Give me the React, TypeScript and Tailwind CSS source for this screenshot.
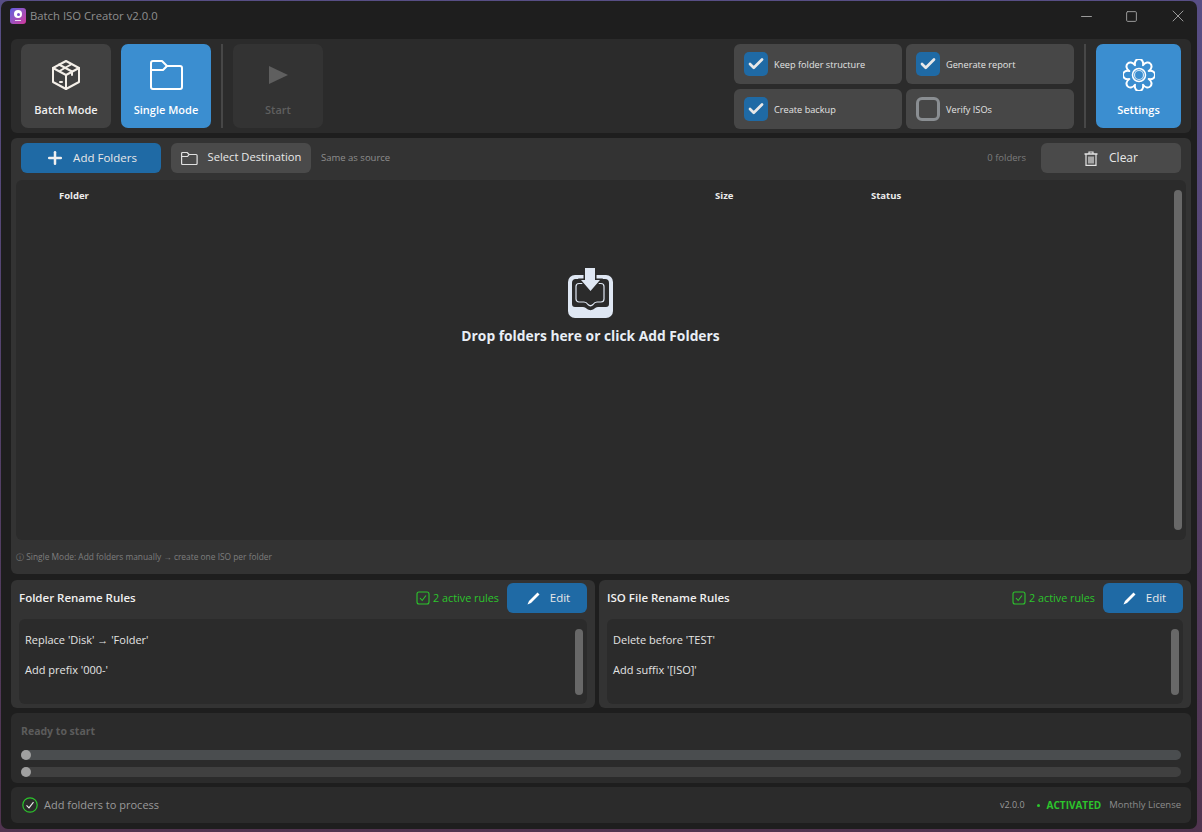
import { Minus, Square, X, Plus, Check } from 'lucide-react';

const font = { fontFamily: '"Open Sans", "Noto Sans", sans-serif' };

// 8 rounded lobes round the centre
function gearPath() {
  const lobes = 8;
  const outer = 17;
  const inner = 10.5;
  let d = '';
  for (let i = 0; i < lobes; i++) {
    const a = (i / lobes) * Math.PI * 2 - Math.PI / 2;
    const step = Math.PI / lobes;
    const pt = (r: number, t: number) => `${(16 + r * Math.cos(t)).toFixed(2)} ${(16 + r * Math.sin(t)).toFixed(2)}`;
    if (i === 0) d += `M${pt(inner, a - step)} `;
    d += `C${pt(outer + 2, a - step * 0.75)} ${pt(outer + 2, a + step * 0.75)} ${pt(inner, a + step)} `;
  }
  return d + 'Z';
}

function BoxIcon() {
  return (
    <svg width="32" height="32" viewBox="0 0 32 32" fill="none" stroke="#f4efe8" strokeWidth="2" strokeLinejoin="round" strokeLinecap="round">
      <path d="M16 2 L29 9 V23 L16 30 L3 23 V9 Z" />
      <path d="M3 9 L16 16 L29 9" />
      <path d="M16 16 V30" />
      <path d="M9 5.5 L22 12.5 V16" />
      <path d="M21 5.5 L9.5 12" />
      <path d="M10 23 h2" />
    </svg>
  );
}

function FolderIcon() {
  return (
    <svg width="34" height="32" viewBox="0 0 34 32" fill="none" stroke="#ffffff" strokeWidth="2" strokeLinejoin="round">
      <path d="M2 4 a2 2 0 0 1 2 -2 h9 l5 5 h13 a2 2 0 0 1 2 2 V28 a2 2 0 0 1 -2 2 H4 a2 2 0 0 1 -2 -2 Z" />
      <path d="M2 11 H14 L18 7" />
    </svg>
  );
}

function SmallFolder() {
  return (
    <svg width="17" height="13" viewBox="0 0 17 13" fill="none" stroke="#e0e0e0" strokeWidth="1.200" strokeLinejoin="round">
      <path d="M0.600 1.500 a1 1 0 0 1 1 -1 h4.500 l2 2 h7 a1 1 0 0 1 1 1 V11.500 a1 1 0 0 1 -1 1 H1.600 a1 1 0 0 1 -1 -1 Z" />
      <path d="M0.600 4.500 H6.500 L8 2.600" />
    </svg>
  );
}

function GearIcon() {
  return (
    <svg width="32" height="32" viewBox="0 0 32 32" fill="none" stroke="#ffffff" strokeWidth="2" strokeLinejoin="round">
      <path d={gearPath()} />
      <circle cx="16" cy="16" r="6.500" strokeWidth="1.500" />
      <circle cx="16" cy="16" r="4.500" strokeWidth="1.200" stroke="#cfe4f5" />
    </svg>
  );
}

function PenIcon() {
  return (
    <svg width="13" height="13" viewBox="0 0 13 13" fill="#ffffff">
      <path d="M10.500 0.500 L12.500 2.500 L4 11 L0.500 12.500 L2 9 Z" />
    </svg>
  );
}

function TrashIcon() {
  return (
    <svg width="14" height="15" viewBox="0 0 14 15" fill="none" stroke="#e4e4e4" strokeWidth="1.200">
      <path d="M0.500 3 H13.500" strokeWidth="1.500" />
      <path d="M5 3 V1 H9 V3" />
      <path d="M2 3 V14.400 H12 V3" />
      <path d="M5 5.500 V12.500 M7 5.500 V12.500 M9 5.500 V12.500" />
    </svg>
  );
}

function DropIcon() {
  return (
    <svg width="45" height="50" viewBox="0 0 45 50">
      <rect x="0" y="7" width="45" height="43" rx="7" fill="#dfe7f3" />
      <path d="M7 11 H37 a4 4 0 0 1 4 4 V36 a3 3 0 0 1 -3 3 H30 c-2 0 -3 1 -4 2 c-2 1.500 -5 1.500 -7 0 c-1 -1 -2 -2 -4 -2 H7 a3 3 0 0 1 -3 -3 V15 a4 4 0 0 1 3 -4 Z" fill="#2b2b2b" />
      <path d="M11 15.500 H33 a3 3 0 0 1 3 3 V31 a3 3 0 0 1 -3 3 H29 c-2 0 -3 1 -4 2.500 c-1.500 1.500 -3.500 1.500 -5 0 c-1 -1.500 -2 -2.500 -4 -2.500 H11 a3 3 0 0 1 -3 -3 V18.500 a3 3 0 0 1 3 -3 Z" fill="none" stroke="#dfe7f3" strokeWidth="1.200" />
      <path d="M15.500 0 H28.500 V10.500 H35 L22.500 25 L10 10.500 H15.500 Z" fill="#2b2b2b" />
      <path d="M17 0 H27 V12 H32 L22.500 23 L13 12 H17 Z" fill="#dfe7f3" />
    </svg>
  );
}

function ToolButton({ label, icon, variant }: { label: string; icon: React.ReactNode; variant: 'gray' | 'blue' | 'off' }) {
  const cls = variant === 'blue' ? 'bg-[#3b8ed0] text-white' : variant === 'gray' ? 'bg-[#414141] text-[#f0f0f0]' : 'bg-[#333333] text-[#5f5f5f]';
  return (
    <div className={`${cls} rounded-[7px] h-[84px] flex flex-col items-center`}>
      <div className="h-[32px] mt-[15px] flex items-center justify-center">{icon}</div>
      <div className="mt-[11px] text-[11px] font-semibold leading-[16px]">{label}</div>
    </div>
  );
}

function Toggle({ label, checked }: { label: string; checked: boolean }) {
  return (
    <div className="h-[40px] bg-[#474747] rounded-[6px] flex items-center pl-[10px]">
      {checked ? (
        <div className="w-[24px] h-[24px] rounded-[5px] bg-[#1f6aa5] flex items-center justify-center">
          <Check size={18} strokeWidth={3.600} color="#e8e8e8" />
        </div>
      ) : (
        <div className="w-[24px] h-[24px] rounded-[6px] border-[3px] border-[#8a8e92]" />
      )}
      <span className="ml-[6px] pt-[2px] text-[9.200px] text-[#e4e4e4]">{label}</span>
    </div>
  );
}

function Rules({ title, lines, className }: { title: string; lines: string[]; className: string }) {
  return (
    <div className={`${className} h-[128px] bg-[#333333] rounded-[6px] pt-[3px] flex flex-col`}>
      <div className="h-[30px] flex items-center pl-[8px] pr-[8px]">
        <span className="text-[11.500px] font-semibold text-[#f0f0f0]">{title}</span>
        <div className="ml-auto flex items-center text-[10.800px] text-[#2cc52c]">
          <svg width="14" height="14" viewBox="0 0 14 14" fill="none" stroke="#2cc52c" strokeWidth="1.100">
            <rect x="1" y="1" width="12" height="12" rx="2" />
            <path d="M4 7 L6.200 9.500 L10 4.500" />
          </svg>
          <span className="ml-[3px]">2 active rules</span>
        </div>
        <div className="ml-[8px] w-[80px] h-[30px] rounded-[6px] bg-[#1f6aa5] flex items-center justify-center pl-[3px] text-[11.500px] text-[#e8e8e8]">
          <PenIcon />
          <span className="ml-[10px]">Edit</span>
        </div>
      </div>
      <div className="ml-[8px] mr-[8px] mt-[6px] h-[85px] bg-[#2b2b2b] rounded-[6px] flex pt-[10px] pr-[4px]">
        <div className="flex-1 pl-[6px] -mt-[4px] text-[11px] text-[#e4e4e4]">
          {lines.map((l) => (
            <div key={l} className="h-[30px] flex items-center">{l}</div>
          ))}
        </div>
        <div className="w-[8px] h-[66px] rounded-[4px] bg-[#686868]" />
      </div>
    </div>
  );
}

function Bar({ color }: { color: string }) {
  return (
    <div className={`${color} h-[10px] rounded-[5px]`}>
      <div className="w-[10px] h-[10px] rounded-full bg-[#a0a0a0]" />
    </div>
  );
}

export default function App() {
  return (
    <div style={font} className="w-[1202px] h-[832px] bg-gradient-to-b from-[#574e85] to-[#50344f] pt-px pl-px overflow-hidden">
      <div className="w-[1196px] h-[828px] rounded-[7px] bg-[#1e1e1e] flex flex-col">
        <div className="h-[30px] flex items-center pl-[9px] shrink-0">
          <div className="w-[16px] h-[16px] rounded-[3px] bg-gradient-to-br from-[#5b5be0] to-[#d0309a] flex flex-col items-center pt-[2px]">
            <div className="w-[8px] h-[8px] rounded-full bg-white flex items-center justify-center">
              <div className="w-[3px] h-[3px] rounded-full bg-[#7a50d0]" />
            </div>
            <div className="w-[6px] h-px mt-[2px] bg-[#e8d8f0]" />
          </div>
          <span className="ml-[4px] text-[11.300px] text-[#8f8f8f]">Batch ISO Creator v2.0.0</span>
          <div className="ml-auto flex items-center gap-[30px] pr-[9px] text-[#9a9a9a]">
            <Minus size={17} strokeWidth={1} absoluteStrokeWidth />
            <Square size={13} strokeWidth={1} absoluteStrokeWidth />
            <X size={20} strokeWidth={1} absoluteStrokeWidth />
          </div>
        </div>

        <div className="mt-[8px] ml-[10px] mr-[6px] flex flex-col gap-[5px]">
          {/* toolbar */}
          <div className="h-[94px] bg-[#2b2b2b] rounded-[6px] flex items-start pt-[5px] pl-[10px] pr-[10px]">
            <div className="w-[90px]"><ToolButton label="Batch Mode" icon={<BoxIcon />} variant="gray" /></div>
            <div className="w-[90px] ml-[10px]"><ToolButton label="Single Mode" icon={<FolderIcon />} variant="blue" /></div>
            <div className="w-[2px] h-[84px] bg-[#474747] ml-[10px]" />
            <div className="w-[90px] ml-[10px]">
              <ToolButton
                label="Start"
                icon={
                  <svg width="19" height="18" viewBox="0 0 19 18" fill="#5f5f5f">
                    <path d="M0 0 L19 9 L0 18 Z" />
                  </svg>
                }
                variant="off"
              />
            </div>
            <div className="ml-auto grid grid-cols-[168px_168px] gap-x-[4px] gap-y-[5px]">
              <Toggle label="Keep folder structure" checked />
              <Toggle label="Generate report" checked />
              <Toggle label="Create backup" checked />
              <Toggle label="Verify ISOs" checked={false} />
            </div>
            <div className="w-[2px] h-[84px] bg-[#474747] ml-[10px]" />
            <div className="w-[85px] ml-[10px]"><ToolButton label="Settings" icon={<GearIcon />} variant="blue" /></div>
          </div>

          {/* folder panel */}
          <div className="h-[436px] bg-[#333333] rounded-[6px] flex flex-col">
            <div className="h-[42px] flex items-start pt-[5px] px-[10px] shrink-0">
              <div className="w-[140px] h-[30px] rounded-[6px] bg-[#1f6aa5] flex items-center justify-center text-[11.500px] text-[#e8e8e8]">
                <Plus size={20} strokeWidth={3} color="#f0f0f0" />
                <span className="ml-[8px]">Add Folders</span>
              </div>
              <div className="ml-[10px] w-[140px] h-[30px] rounded-[6px] bg-[#4a4a4a] flex items-center justify-center text-[11.200px] text-[#e8e8e8]">
                <SmallFolder />
                <span className="ml-[10px] -mt-px">Select Destination</span>
              </div>
              <span className="ml-[10px] text-[9.500px] text-[#8e8e8e] leading-[30px]">Same as source</span>
              <span className="ml-auto text-[9.500px] text-[#7c7c7c] leading-[30px]">0 folders</span>
              <div className="ml-[15px] w-[140px] h-[30px] rounded-[6px] bg-[#4a4a4a] flex items-center justify-center text-[12px] text-[#e8e8e8]">
                <TrashIcon />
                <span className="ml-[11px]">Clear</span>
              </div>
            </div>
            <div className="relative mx-[5px] h-[360px] bg-[#2b2b2b] rounded-[6px] shrink-0 flex flex-col items-center pr-[21px]">
              <div className="w-full h-[32px] flex items-center text-[9.500px] font-bold text-[#ececec] shrink-0">
                <span className="ml-[43px] w-[656px]">Folder</span>
                <span className="w-[156px]">Size</span>
                <span>Status</span>
              </div>
              <div className="mt-[56px]"><DropIcon /></div>
              <div className="mt-[8px] text-[13.800px] font-bold text-[#e8eef6]">Drop folders here or click Add Folders</div>
              <div className="absolute right-[4px] top-[10px] w-[8px] h-[340px] rounded-[4px] bg-[#686868]" />
            </div>
            <div className="pl-[5px] mt-[10px] text-[8.400px] text-[#7e7e7e] leading-[14px]">ⓘ Single Mode: Add folders manually → create one ISO per folder</div>
          </div>

          {/* rename rules */}
          <div className="flex gap-[4px] mt-px">
            <Rules className="w-[584px]" title="Folder Rename Rules" lines={["Replace 'Disk' → 'Folder'", "Add prefix '000-'"]} />
            <Rules className="w-[592px]" title="ISO File Rename Rules" lines={["Delete before 'TEST'", "Add suffix '[ISO]'"]} />
          </div>

          {/* progress */}
          <div className="h-[70px] bg-[#2b2b2b] rounded-[6px] px-[10px] pt-[10px]">
            <div className="text-[10.500px] font-bold text-[#5c5c5c] leading-[16px]">Ready to start</div>
            <div className="mt-[11px] flex flex-col gap-[7px]">
              <Bar color="bg-[#4a4d4f]" />
              <Bar color="bg-[#404040]" />
            </div>
          </div>

          {/* status */}
          <div className="-mt-px h-[36px] bg-[#2b2b2b] rounded-[6px] flex items-center pl-[11px] pr-[10px]">
            <svg width="16" height="16" viewBox="0 0 16 16" fill="none" stroke="#2cc52c" strokeWidth="1.200">
              <circle cx="8" cy="8" r="7.200" />
              <path d="M4.500 8.300 L7 10.800 L11.500 5.200" stroke="#e8e8e8" />
            </svg>
            <span className="ml-[6px] pt-px text-[11px] text-[#9a9a9a]">Add folders to process</span>
            <span className="ml-auto text-[9px] text-[#9a9a9a]">v2.0.0</span>
            <span className="ml-[12px] w-[3px] h-[3px] rounded-full bg-[#2cc52c]" />
            <span className="ml-[7px] text-[10px] font-bold text-[#2cc52c]">ACTIVATED</span>
            <span className="ml-[8px] text-[9.500px] text-[#8c8c8c]">Monthly License</span>
          </div>
        </div>
      </div>
    </div>
  );
}
